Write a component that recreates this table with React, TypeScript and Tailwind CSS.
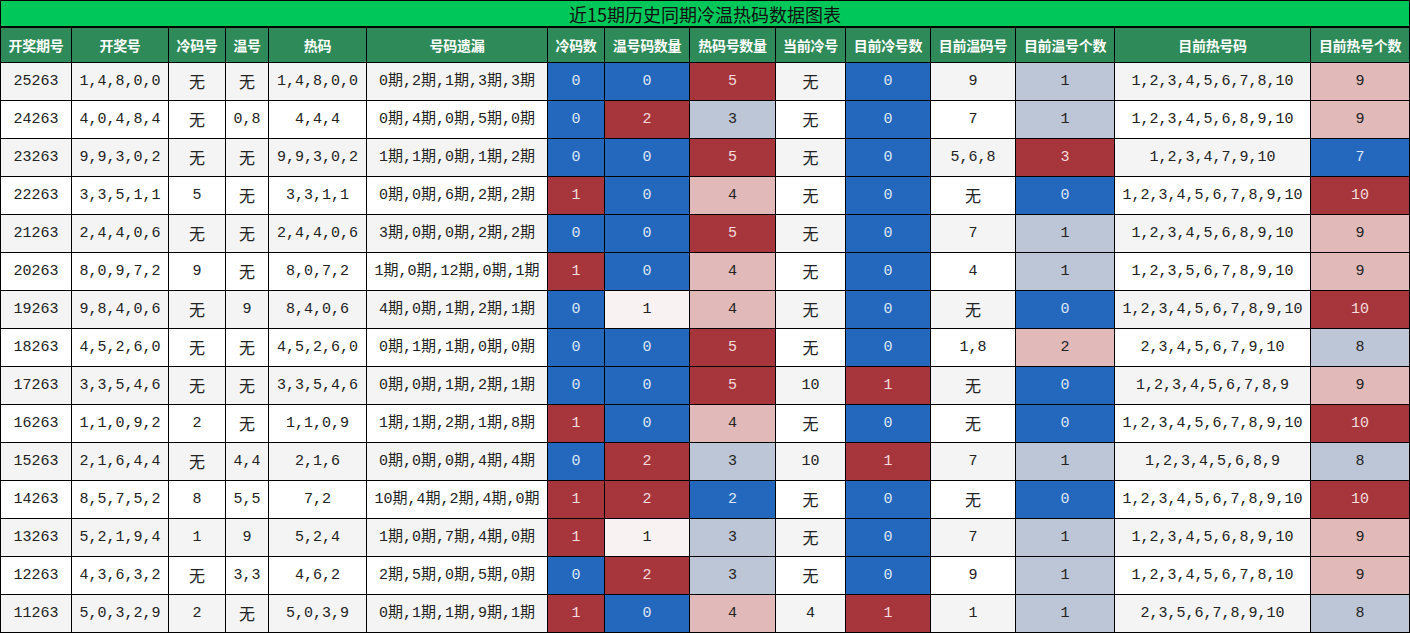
const headers = [
  "开奖期号", "开奖号", "冷码号", "温号", "热码", "号码遗漏", "冷码数", "温号码数量",
  "热码号数量", "当前冷号", "目前冷号数", "目前温码号", "目前温号个数", "目前热号码", "目前热号个数",
];

// colored cells are written as "B:0" (B blue, R red, P pink, G gray-blue, W pale)
const rows: string[][] = [
  ["25263", "1,4,8,0,0", "无", "无", "1,4,8,0,0", "0期,2期,1期,3期,3期", "B:0", "B:0", "R:5", "无", "B:0", "9", "G:1", "1,2,3,4,5,6,7,8,10", "P:9"],
  ["24263", "4,0,4,8,4", "无", "0,8", "4,4,4", "0期,4期,0期,5期,0期", "B:0", "R:2", "G:3", "无", "B:0", "7", "G:1", "1,2,3,4,5,6,8,9,10", "P:9"],
  ["23263", "9,9,3,0,2", "无", "无", "9,9,3,0,2", "1期,1期,0期,1期,2期", "B:0", "B:0", "R:5", "无", "B:0", "5,6,8", "R:3", "1,2,3,4,7,9,10", "B:7"],
  ["22263", "3,3,5,1,1", "5", "无", "3,3,1,1", "0期,0期,6期,2期,2期", "R:1", "B:0", "P:4", "无", "B:0", "无", "B:0", "1,2,3,4,5,6,7,8,9,10", "R:10"],
  ["21263", "2,4,4,0,6", "无", "无", "2,4,4,0,6", "3期,0期,0期,2期,2期", "B:0", "B:0", "R:5", "无", "B:0", "7", "G:1", "1,2,3,4,5,6,8,9,10", "P:9"],
  ["20263", "8,0,9,7,2", "9", "无", "8,0,7,2", "1期,0期,12期,0期,1期", "R:1", "B:0", "P:4", "无", "B:0", "4", "G:1", "1,2,3,5,6,7,8,9,10", "P:9"],
  ["19263", "9,8,4,0,6", "无", "9", "8,4,0,6", "4期,0期,1期,2期,1期", "B:0", "W:1", "P:4", "无", "B:0", "无", "B:0", "1,2,3,4,5,6,7,8,9,10", "R:10"],
  ["18263", "4,5,2,6,0", "无", "无", "4,5,2,6,0", "0期,1期,1期,0期,0期", "B:0", "B:0", "R:5", "无", "B:0", "1,8", "P:2", "2,3,4,5,6,7,9,10", "G:8"],
  ["17263", "3,3,5,4,6", "无", "无", "3,3,5,4,6", "0期,0期,1期,2期,1期", "B:0", "B:0", "R:5", "10", "R:1", "无", "B:0", "1,2,3,4,5,6,7,8,9", "P:9"],
  ["16263", "1,1,0,9,2", "2", "无", "1,1,0,9", "1期,1期,2期,1期,8期", "R:1", "B:0", "P:4", "无", "B:0", "无", "B:0", "1,2,3,4,5,6,7,8,9,10", "R:10"],
  ["15263", "2,1,6,4,4", "无", "4,4", "2,1,6", "0期,0期,0期,4期,4期", "B:0", "R:2", "G:3", "10", "R:1", "7", "G:1", "1,2,3,4,5,6,8,9", "G:8"],
  ["14263", "8,5,7,5,2", "8", "5,5", "7,2", "10期,4期,2期,4期,0期", "R:1", "R:2", "B:2", "无", "B:0", "无", "B:0", "1,2,3,4,5,6,7,8,9,10", "R:10"],
  ["13263", "5,2,1,9,4", "1", "9", "5,2,4", "1期,0期,7期,4期,0期", "R:1", "W:1", "G:3", "无", "B:0", "7", "G:1", "1,2,3,4,5,6,8,9,10", "P:9"],
  ["12263", "4,3,6,3,2", "无", "3,3", "4,6,2", "2期,5期,0期,5期,0期", "B:0", "R:2", "G:3", "无", "B:0", "9", "G:1", "1,2,3,4,5,6,7,8,10", "P:9"],
  ["11263", "5,0,3,2,9", "2", "无", "5,0,3,9", "0期,1期,1期,9期,1期", "R:1", "B:0", "P:4", "4", "R:1", "1", "G:1", "2,3,5,6,7,8,9,10", "G:8"],
];

const tones: Record<string, string> = {
  B: "bg-[#2468bd] text-[#dde7f5]",
  R: "bg-[#a6363c] text-[#f3dddd]",
  P: "bg-[#e0b9b8] text-[#222]",
  G: "bg-[#bdc6d6] text-[#222]",
  W: "bg-[#f8f2f2] text-[#222]",
};

function Cell({ value, stripe }: { value: string; stripe: boolean }) {
  const m = value.match(/^([BRPGW]):(.*)$/);
  const tone = m ? tones[m[1]] : stripe ? "bg-[#f4f4f4] text-[#222]" : "bg-white text-[#222]";
  const shift = value === "无" ? "pt-[4px] text-[16px]" : "";
  return (
    <div className={`h-[37px] flex items-center justify-center whitespace-nowrap leading-none ${shift} ${tone}`}>
      {m ? m[2] : value}
    </div>
  );
}

export default function App() {
  return (
    <div className="w-[1410px] border border-black bg-black">
      <div className="h-[27px] border-b-2 border-black bg-[#00c75a] flex items-center justify-center text-[18px] text-[#111] font-['Noto_Sans_CJK_SC',sans-serif] leading-none">
        近15期历史同期冷温热码数据图表
      </div>
      <div className="grid grid-cols-[70px_96px_56px_42px_97px_180px_56px_84px_85px_69px_84px_84px_98px_195px_98px] gap-px font-['Liberation_Mono','Noto_Sans_CJK_SC',monospace] text-[15px]">
        {headers.map((h) => (
          <div
            key={h}
            className="h-[34px] bg-[#2e8a58] flex items-center justify-center text-white font-bold text-[14px] font-['Noto_Sans_CJK_SC',sans-serif] whitespace-nowrap tracking-[-0.3px]"
          >
            {h}
          </div>
        ))}
        {rows.map((r, i) =>
          r.map((v, j) => <Cell key={`${i}-${j}`} value={v} stripe={i % 2 === 0} />)
        )}
      </div>
    </div>
  );
}
